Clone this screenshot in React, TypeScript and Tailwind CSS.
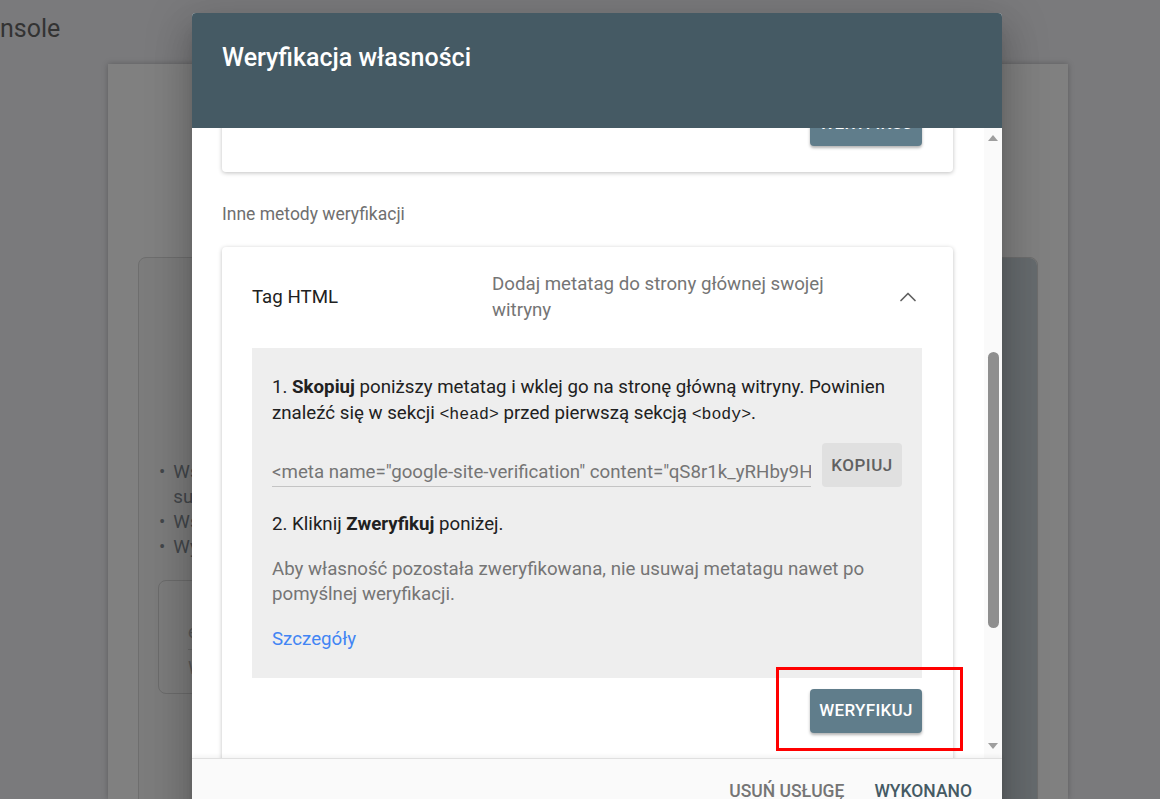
import { ChevronUp } from "lucide-react";

function ScrollBar() {
  return (
    <div className="w-[18px] bg-[#fafafa] flex flex-col items-center">
      <svg width="10" height="6" viewBox="0 0 10 6" className="mt-[7px]">
        <path d="M0 6L5 0l5 6z" fill="#9e9e9e" />
      </svg>
      <div className="w-[11px] h-[276px] mt-[211px] rounded-full bg-[#8f8f8f]" />
      <div className="flex-1" />
      <svg width="10" height="6" viewBox="0 0 10 6" className="mb-[9px]">
        <path d="M0 0h10L5 6z" fill="#9e9e9e" />
      </svg>
    </div>
  );
}

function VerifyButton() {
  return (
    <button
      type="button"
      className="h-[44px] w-[112px] rounded bg-[#607d8b] text-white text-[17px] font-medium tracking-[0.3px] shadow-[0_2px_3px_rgba(0,0,0,0.3)]"
    >
      WERYFIKUJ
    </button>
  );
}

function Dialog() {
  return (
    <div className="absolute left-[192px] top-[13px] w-[810px] h-[830px] flex flex-col rounded-t bg-white shadow-[0_11px_15px_-7px_rgba(0,0,0,0.2),0_24px_38px_3px_rgba(0,0,0,0.14),0_9px_46px_8px_rgba(0,0,0,0.12)]">
      {/* header */}
      <div className="h-[115px] shrink-0 rounded-t bg-[#455a64] pl-[30px] pt-[30px]">
        <h2 className="text-white text-[25px] leading-[30px] font-medium">Weryfikacja własności</h2>
      </div>

      {/* body */}
      <div className="h-[630px] shrink-0 flex">
        <div className="flex-1 overflow-hidden pl-[30px] pr-[31px]">
          {/* previous method card, scrolled mostly out of view */}
          <div className="-mt-[36px] h-[80px] rounded bg-white shadow-[0_1px_4px_rgba(0,0,0,0.25)] flex justify-end items-start pt-[10px] pr-[31px]">
            <VerifyButton />
          </div>

          <p className="mt-[30px] text-[17.5px] leading-6 text-[#6f6f6f]">Inne metody weryfikacji</p>

          <div className="mt-[21px] rounded bg-white shadow-[0_1px_4px_rgba(0,0,0,0.25)] pl-[30px] pr-[31px] pt-[24px] pb-[40px]">
            <div className="flex items-center">
              <div className="w-[240px] text-[18.7px] text-[#212121]">Tag HTML</div>
              <div className="w-[370px] text-[18.7px] leading-[26px] text-[#757575]">
                Dodaj metatag do strony głównej swojej witryny
              </div>
              <div className="ml-auto">
                <ChevronUp size={28} strokeWidth={1.5} color="#616161" />
              </div>
            </div>

            <div className="mt-[25px] bg-[#eeeeee] px-5 pt-[26px] pb-[26px] text-[18.7px] leading-[26px] text-[#212121]">
              <p>
                1. <b className="font-bold">Skopiuj</b> poniższy metatag i wklej go na stronę główną witryny. Powinien
                znaleźć się w sekcji <span className="font-['Liberation_Mono',monospace] text-[16.5px]">&lt;head&gt;</span> przed
                pierwszą sekcją <span className="font-['Liberation_Mono',monospace] text-[16.5px]">&lt;body&gt;</span>.
              </p>

              <div className="mt-[15px] flex items-end gap-[11px]">
                <div className="flex-1 min-w-0 overflow-hidden whitespace-nowrap border-b border-[#c4c4c4] pb-[1px] text-[#757575]">
                  &lt;meta name="google-site-verification" content="qS8r1k_yRHby9HfTq2Xn0pLw7cVb3mZa" /&gt;
                </div>
                <button
                  type="button"
                  className="h-[44px] w-[80px] shrink-0 rounded bg-[#e0e0e0] text-[17px] font-medium tracking-[0.5px] text-[#616161]"
                >
                  KOPIUJ
                </button>
              </div>

              <p className="mt-[24px]">
                2. Kliknij <b className="font-bold">Zweryfikuj</b> poniżej.
              </p>

              <p className="mt-[20px] leading-[25px] text-[#757575]">
                Aby własność pozostała zweryfikowana, nie usuwaj metatagu nawet po pomyślnej weryfikacji.
              </p>

              <p className="mt-[19px]">
                <a className="text-[#4285f4]">Szczegóły</a>
              </p>
            </div>

            <div className="mt-[11px] flex justify-end">
              <VerifyButton />
            </div>
          </div>
        </div>
        <ScrollBar />
      </div>

      {/* footer */}
      <div className="flex-1 border-t border-[#e0e0e0] bg-[#fafafa] shadow-[0_-2px_4px_rgba(0,0,0,0.05)] flex justify-end gap-[30px] pr-[30px] pt-[20px] text-[17.5px] leading-6 font-medium">
        <span className="text-[#757575]">USUŃ USŁUGĘ</span>
        <span className="text-[#455a64]">WYKONANO</span>
      </div>
    </div>
  );
}

export default function App() {
  return (
    <div className="relative h-[799px] w-[1160px] overflow-hidden bg-[#7a7a7c] font-[Roboto,sans-serif]">
      {/* dimmed page behind the dialog */}
      <div className="h-[64px] pt-[14px] text-[25px] leading-[30px] text-[#333333]">nsole</div>
      <div className="ml-[108px] w-[960px] h-[735px] bg-[#808080] shadow-[0_0_6px_rgba(0,0,0,0.25)] pt-[193px] pl-[30px] pr-[30px]">
        <div className="relative h-[560px] rounded-t-lg border border-[#6e6e6e] bg-[#7c7c7c] overflow-hidden">
          <div className="absolute right-0 top-0 bottom-0 w-[40px] bg-[#666b6e] rounded-tr-lg" />
          <ul className="mt-[202px] ml-[20px] text-[18.7px] leading-[25px] text-[#43474b]">
            <li className="flex gap-[8px]"><span>•</span><span>Wszystkie adresy URL we wszystkich<br />subdomenach</span></li>
            <li className="flex gap-[8px]"><span>•</span><span>Wszystkie adresy URL ze wszystkimi prefiksami</span></li>
            <li className="flex gap-[8px]"><span>•</span><span>Wymaga weryfikacji DNS</span></li>
          </ul>
          <div className="ml-[19px] mt-[20px] mr-[20px] h-[114px] rounded-lg border border-[#6c6c6c] pl-[29px] pt-[37px] text-[18px] text-[#5a5a5a]">
            <div className="border-b border-[#6c6c6c] pb-[4px]">example.com</div>
            <div className="pt-[4px]">Wpisz domenę</div>
          </div>
        </div>
      </div>

      <Dialog />

      {/* red highlight annotation */}
      <div className="absolute left-[776px] top-[667px] w-[187px] h-[84px] border-[3px] border-[#ff0000]" />
    </div>
  );
}
